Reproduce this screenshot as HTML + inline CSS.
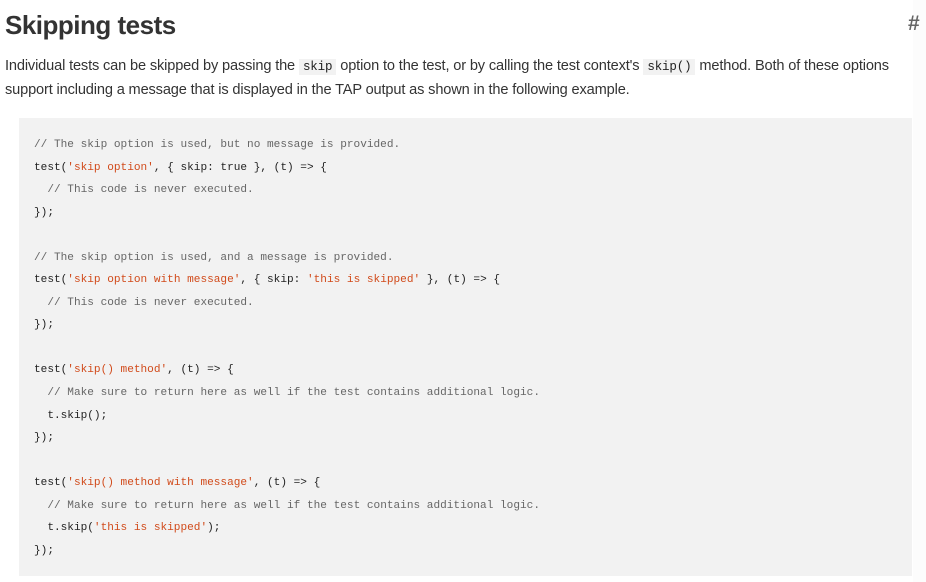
<!DOCTYPE html>
<html><head><meta charset="utf-8"><style>
html,body{margin:0;padding:0;background:#fff;width:926px;height:582px;overflow:hidden}
body{font-family:"Liberation Sans",sans-serif;color:#333}
h2{position:absolute;left:5px;top:8px;margin:0;font-size:26px;font-weight:bold;color:#333;letter-spacing:-0.5px;line-height:34px}
.hash{position:absolute;left:908px;top:12px;font-size:21px;font-weight:bold;color:#666}
p{position:absolute;left:5px;top:55px;width:915px;margin:0;font-size:14.6px;line-height:23px;color:#333;letter-spacing:-0.15px}
p code{font-family:"Liberation Mono",monospace;font-size:12.5px;background:#f2f2f2;padding:1px 4px;color:#222}
pre{position:absolute;left:19px;top:118px;width:893px;height:458px;margin:0;background:#f2f2f2;box-sizing:border-box;padding:16px 15px 0;font-family:"Liberation Mono",monospace;font-size:11.1px;line-height:22.55px;color:#222}
.c{color:#666}.s{color:#d14a1a}
.rs{position:absolute;left:913px;top:0;width:13px;height:582px;background:#fcfcfc}
</style></head><body>
<div class="rs"></div>
<h2>Skipping tests</h2><div class="hash">#</div>
<p>Individual tests can be skipped by passing the <code>skip</code> option to the test, or by calling the test context's <code>skip()</code> method. Both of these options support including a message that is displayed in the TAP output as shown in the following example.</p>
<pre><span class="c">// The skip option is used, but no message is provided.</span>
test(<span class="s">'skip option'</span>, { skip: true }, (t) =&gt; {
  <span class="c">// This code is never executed.</span>
});

<span class="c">// The skip option is used, and a message is provided.</span>
test(<span class="s">'skip option with message'</span>, { skip: <span class="s">'this is skipped'</span> }, (t) =&gt; {
  <span class="c">// This code is never executed.</span>
});

test(<span class="s">'skip() method'</span>, (t) =&gt; {
  <span class="c">// Make sure to return here as well if the test contains additional logic.</span>
  t.skip();
});

test(<span class="s">'skip() method with message'</span>, (t) =&gt; {
  <span class="c">// Make sure to return here as well if the test contains additional logic.</span>
  t.skip(<span class="s">'this is skipped'</span>);
});</pre>
</body></html>
